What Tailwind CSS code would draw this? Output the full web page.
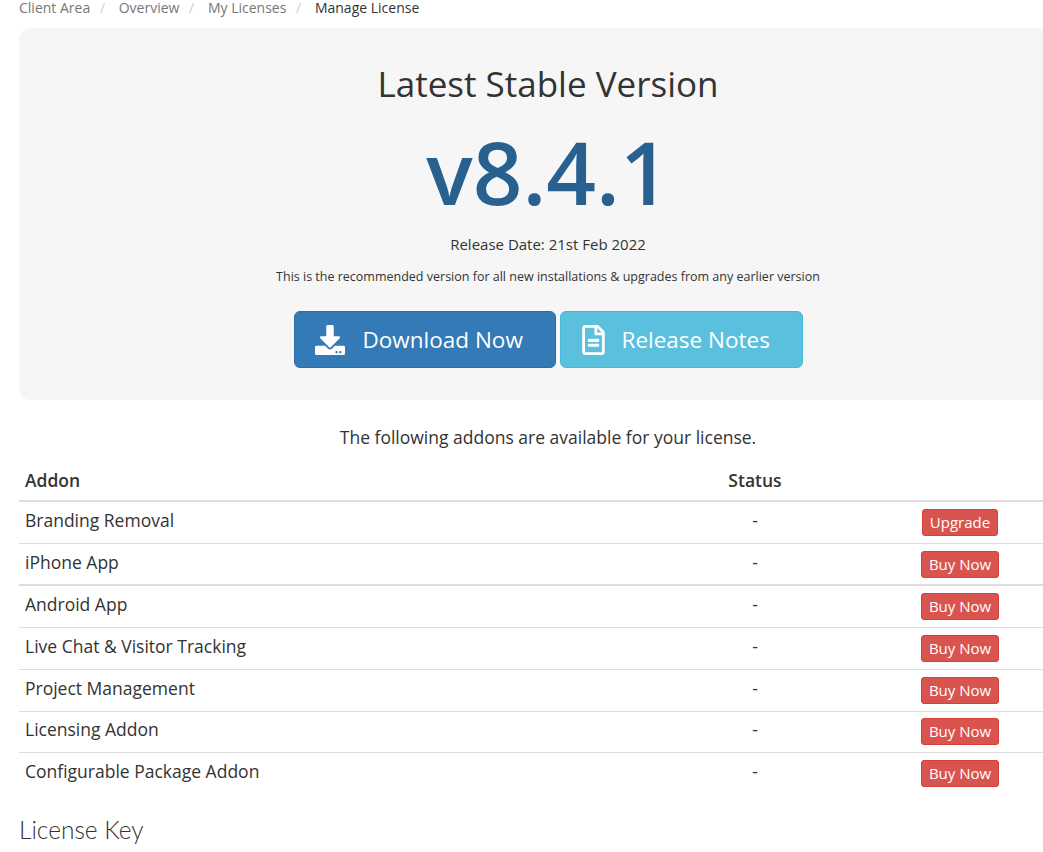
<!DOCTYPE html>
<html lang="en">
<head>
    <meta charset="UTF-8">
    <title>Manage License</title>
    <script src="https://cdn.jsdelivr.net/npm/@tailwindcss/browser@4"></script>
</head>
<body class="bg-white overflow-hidden h-[852px] font-['Open_Sans',sans-serif] text-[#333] text-[14px]">
    <div class="w-[1077px] pl-[19px]">
        <!-- Breadcrumb -->
        <nav class="h-[30px] -mt-[2px] flex items-start text-[14px] leading-[20px] text-[#777]">
            <span>Client Area</span>
            <span class="pl-[9.7px] pr-[13.7px] text-[#ccc]">/</span>
            <span>Overview</span>
            <span class="pl-[9.7px] pr-[13.7px] text-[#ccc]">/</span>
            <span>My Licenses</span>
            <span class="pl-[9.7px] pr-[13.7px] text-[#ccc]">/</span>
            <span class="text-[#333]">Manage License</span>
        </nav>

        <!-- Latest version -->
        <section class="bg-[#f6f6f6] rounded-[12px] h-[372px] flex flex-col items-center">
            <h1 class="mt-[32px] text-[35px] leading-[48px]">Latest Stable Version</h1>
            <div class="mt-[13px] text-[87px] leading-[100px] font-semibold text-[#286090]">v8.4.1</div>
            <p class="mt-[13px] text-[15px] leading-[20px]">Release Date: 21st Feb 2022</p>
            <p class="mt-[13px] text-[12.5px] leading-[20px]">This is the recommended version for all new installations &amp; upgrades from any earlier version</p>
            <div class="mt-[24px] flex gap-[4px]">
                <a class="h-[57px] w-[262px] pl-[20px] flex items-center gap-[18px] bg-[#337ab7] border border-[#2e6da4] rounded-[6px] text-white text-[22.5px]">
                    <svg class="w-[30px] h-[30px] fill-white" viewBox="0 0 512 512"><path d="M216 0h80c13.3 0 24 10.7 24 24v168h87.7c17.8 0 26.7 21.5 14.1 34.1L269.7 378.3c-7.5 7.5-19.8 7.5-27.3 0L90.1 226.1c-12.6-12.6-3.7-34.1 14.1-34.1H192V24c0-13.3 10.7-24 24-24zm296 376v112c0 13.3-10.7 24-24 24H24c-13.3 0-24-10.7-24-24V376c0-13.3 10.7-24 24-24h146.7l49 49c20.1 20.1 52.5 20.1 72.6 0l49-49H488c13.3 0 24 10.7 24 24zm-124 88c0-11-9-20-20-20s-20 9-20 20 9 20 20 20 20-9 20-20zm64 0c0-11-9-20-20-20s-20 9-20 20 9 20 20 20 20-9 20-20z"/></svg>
                    <span>Download Now</span>
                </a>
                <a class="h-[57px] w-[243px] pl-[21px] flex items-center gap-[17px] bg-[#5bc0de] border border-[#46b8da] rounded-[6px] text-white text-[22.5px]">
                    <svg class="w-[23px] h-[30px] fill-white" viewBox="0 0 384 512"><path d="M288 248v28c0 6.6-5.4 12-12 12H108c-6.6 0-12-5.4-12-12v-28c0-6.6 5.4-12 12-12h168c6.6 0 12 5.4 12 12zm-12 72H108c-6.6 0-12 5.4-12 12v28c0 6.6 5.4 12 12 12h168c6.6 0 12-5.4 12-12v-28c0-6.6-5.4-12-12-12zm108-188.1V464c0 26.5-21.5 48-48 48H48c-26.5 0-48-21.5-48-48V48C0 21.5 21.5 0 48 0h204.1C264.8 0 277 5.1 286 14.1L369.9 98c9 8.9 14.1 21.2 14.1 33.9zm-128-80V128h76.1L256 51.9zM336 464V176H232c-13.3 0-24-10.7-24-24V48H48v416h288z"/></svg>
                    <span>Release Notes</span>
                </a>
            </div>
        </section>

        <p class="mt-[26px] h-[22px] text-center text-[17.5px] leading-[22px]">The following addons are available for your license.</p>

        <!-- Addons -->
        <table class="mt-[15px] w-full table-fixed text-[17.5px]">
            <colgroup>
                <col class="w-[648px]">
                <col class="w-[176px]">
                <col>
            </colgroup>
            <thead>
                <tr class="h-[38px] border-b-2 border-[#ddd] font-semibold">
                    <th class="px-[6px] pb-[2px] text-left font-semibold">Addon</th>
                    <th class="pb-[2px] text-center font-semibold">Status</th>
                    <th></th>
                </tr>
            </thead>
            <tbody>
                <tr class="h-[42px] border-b border-[#ddd]">
                    <td class="px-[6px] pb-[4px]">Branding Removal</td>
                    <td class="text-center pb-[4px]">-</td>
                    <td class="text-center"><a class="inline-block h-[27px] px-[7px] bg-[#d9534f] border border-[#d43f3a] rounded-[3px] text-white text-[15px] leading-[25px]">Upgrade</a></td>
                </tr>
                <tr class="h-[42px] border-b-2 border-[#ddd]">
                    <td class="px-[6px] pb-[4px]">iPhone App</td>
                    <td class="text-center pb-[4px]">-</td>
                    <td class="text-center"><a class="inline-block h-[27px] px-[7px] bg-[#d9534f] border border-[#d43f3a] rounded-[3px] text-white text-[15px] leading-[25px]">Buy Now</a></td>
                </tr>
                <tr class="h-[42px] border-b border-[#ddd]">
                    <td class="px-[6px] pb-[4px]">Android App</td>
                    <td class="text-center pb-[4px]">-</td>
                    <td class="text-center"><a class="inline-block h-[27px] px-[7px] bg-[#d9534f] border border-[#d43f3a] rounded-[3px] text-white text-[15px] leading-[25px]">Buy Now</a></td>
                </tr>
                <tr class="h-[42px] border-b border-[#ddd]">
                    <td class="px-[6px] pb-[4px]">Live Chat &amp; Visitor Tracking</td>
                    <td class="text-center pb-[4px]">-</td>
                    <td class="text-center"><a class="inline-block h-[27px] px-[7px] bg-[#d9534f] border border-[#d43f3a] rounded-[3px] text-white text-[15px] leading-[25px]">Buy Now</a></td>
                </tr>
                <tr class="h-[42px] border-b border-[#ddd]">
                    <td class="px-[6px] pb-[4px]">Project Management</td>
                    <td class="text-center pb-[4px]">-</td>
                    <td class="text-center"><a class="inline-block h-[27px] px-[7px] bg-[#d9534f] border border-[#d43f3a] rounded-[3px] text-white text-[15px] leading-[25px]">Buy Now</a></td>
                </tr>
                <tr class="h-[41px] border-b border-[#ddd]">
                    <td class="px-[6px] pb-[4px]">Licensing Addon</td>
                    <td class="text-center pb-[4px]">-</td>
                    <td class="text-center pb-[2px]"><a class="inline-block h-[27px] px-[7px] bg-[#d9534f] border border-[#d43f3a] rounded-[3px] text-white text-[15px] leading-[25px]">Buy Now</a></td>
                </tr>
                <tr class="h-[42px]">
                    <td class="px-[6px] pb-[4px]">Configurable Package Addon</td>
                    <td class="text-center pb-[4px]">-</td>
                    <td class="text-center"><a class="inline-block h-[27px] px-[7px] bg-[#d9534f] border border-[#d43f3a] rounded-[3px] text-white text-[15px] leading-[25px]">Buy Now</a></td>
                </tr>
            </tbody>
        </table>

        <h2 class="mt-[21px] text-[24.5px] leading-[30px] font-light font-['Lato',sans-serif]">License Key</h2>
    </div>
</body>
</html>
